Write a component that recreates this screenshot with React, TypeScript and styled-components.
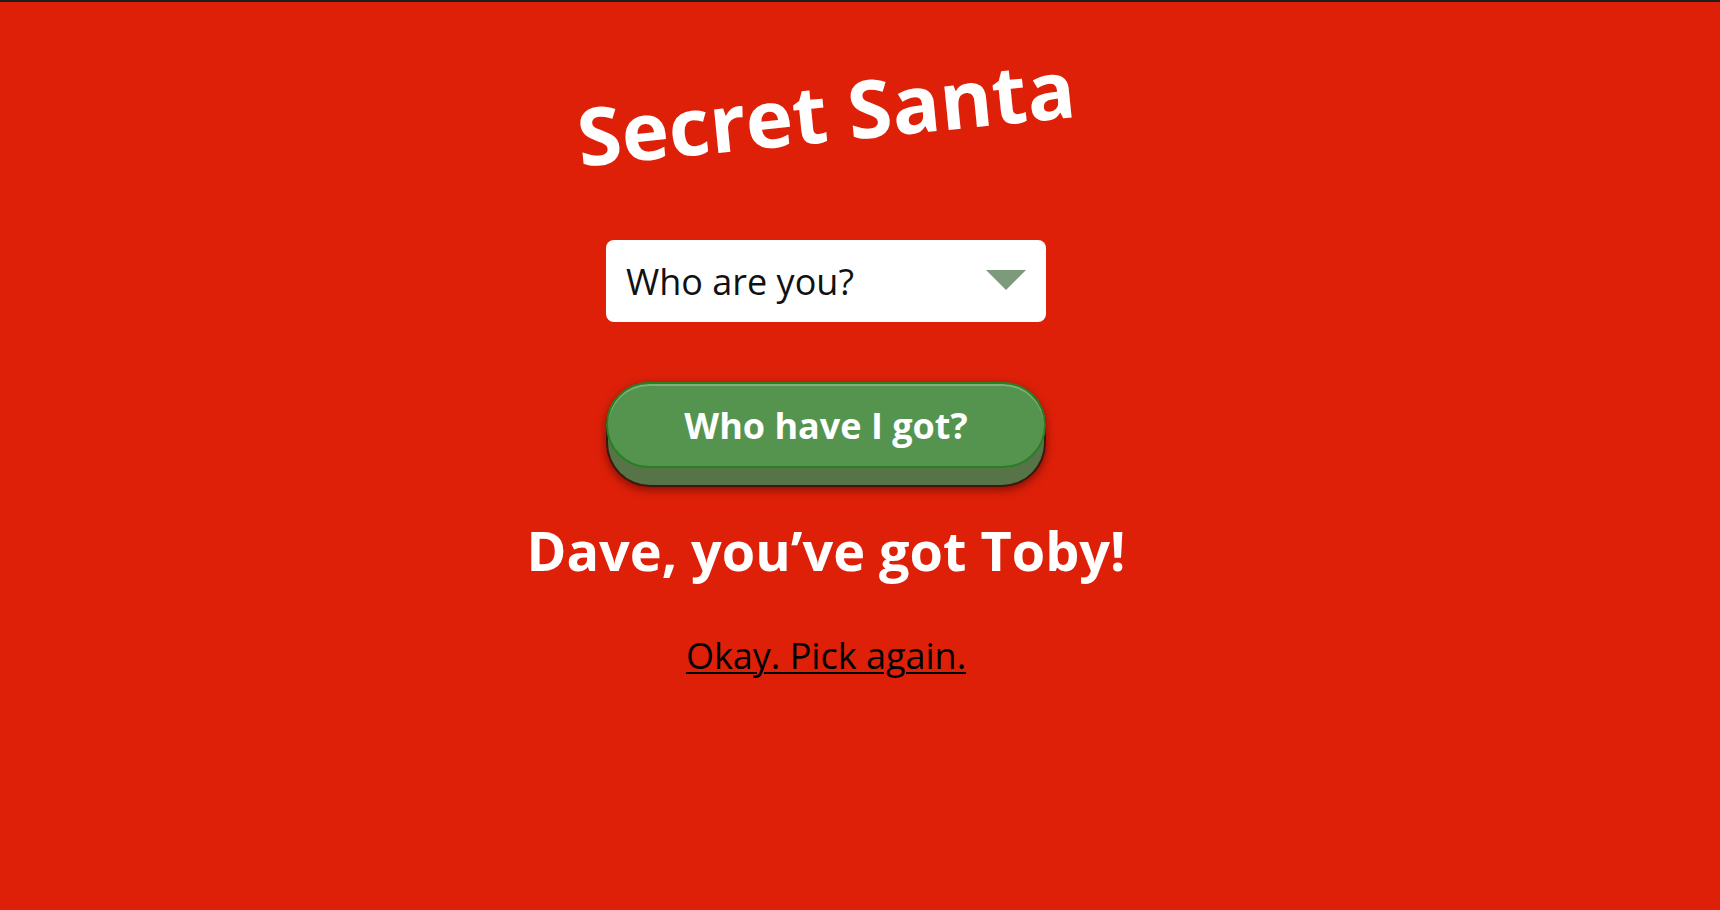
import React, { useState } from "react";
import styled, { createGlobalStyle } from "styled-components";

const GlobalStyle = createGlobalStyle`
  html, body {
    margin: 0;
    padding: 0;
    background: #de2009;
    font-family: "Open Sans", "Noto Sans", sans-serif;
  }
  body {
    border-top: 2px solid #1e1e1e;
    min-height: 908px;
  }
`;

const Page = styled.main`
  width: calc(100% - 68px);
  display: flex;
  flex-direction: column;
  align-items: center;
  padding-top: 54px;
`;

const Title = styled.h1`
  margin: 0;
  font-size: 80px;
  font-weight: 700;
  color: #ffffff;
  transform: rotate(-5.7deg);
  line-height: normal;
`;

const SelectWrap = styled.div`
  position: relative;
  margin-top: 75px;
  width: 440px;
  height: 82px;
`;

const Select = styled.select`
  appearance: none;
  -webkit-appearance: none;
  width: 100%;
  height: 100%;
  border: none;
  border-radius: 8px;
  background: #ffffff;
  color: #111111;
  font-family: "Open Sans", "Noto Sans", sans-serif;
  font-size: 36px;
  padding: 0 0 0 20px;
  outline: none;
`;

const Arrow = styled.svg`
  position: absolute;
  right: 20px;
  top: 30px;
  pointer-events: none;
`;

const Button = styled.button`
  margin-top: 60px;
  width: 440px;
  height: 105px;
  padding: 0 0 17px 0;
  border: 2px solid #3a1a0c;
  border-top-color: transparent;
  border-radius: 44px;
  background: #567447;
  box-shadow: 0 3px 10px rgba(60, 0, 0, 0.55);
  cursor: pointer;
  display: flex;
  align-items: stretch;
  box-sizing: border-box;
`;

const ButtonFace = styled.span`
  flex: 1;
  margin: -2px -2px 0 -2px;
  border: 2px solid #2a7f22;
  border-radius: 44px;
  background: #54944f;
  box-shadow: inset 0 2px 0 rgba(255, 255, 255, 0.25);
  color: #ffffff;
  font-family: "Open Sans", "Noto Sans", sans-serif;
  font-weight: 700;
  font-size: 36px;
  display: flex;
  align-items: center;
  justify-content: center;
`;

const Result = styled.h2`
  margin: 26px 0 0 0;
  font-size: 54px;
  font-weight: 700;
  color: #ffffff;
  line-height: normal;
`;

const Again = styled.a`
  margin-top: 44px;
  font-size: 36px;
  color: #000000;
  text-decoration: underline;
  text-underline-offset: 3px;
  text-decoration-thickness: 2px;
  cursor: pointer;
`;

export default function App() {
  const [who, setWho] = useState("");
  return (
    <>
      <GlobalStyle />
      <Page>
        <Title>Secret Santa</Title>
        <SelectWrap>
          <Select value={who} onChange={(e) => setWho(e.target.value)}>
            <option value="">Who are you?</option>
            <option value="dave">Dave</option>
            <option value="toby">Toby</option>
          </Select>
          <Arrow width="40" height="20" viewBox="0 0 40 20">
            <polygon points="0,0 40,0 20,20" fill="#7d9a7b" />
          </Arrow>
        </SelectWrap>
        <Button type="button">
          <ButtonFace>Who have I got?</ButtonFace>
        </Button>
        <Result>Dave, you’ve got Toby!</Result>
        <Again>Okay. Pick again.</Again>
      </Page>
    </>
  );
}
